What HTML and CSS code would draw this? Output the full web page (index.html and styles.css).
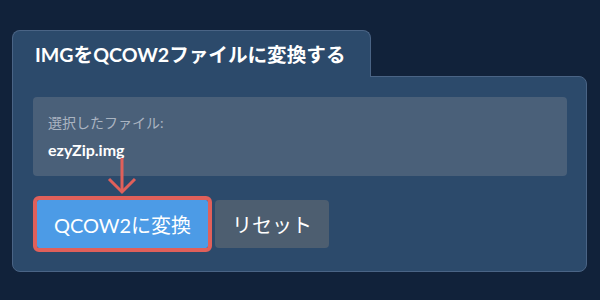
FILE: index.html
```html
<!DOCTYPE html>
<html lang="ja">
<head>
<meta charset="utf-8">
<link rel="stylesheet" href="styles.css">
</head>
<body>
<div class="card">
  <div class="tab"><h1 class="title">IMGをQCOW2ファイルに変換する</h1></div>
  <div class="panel">
    <div class="filebox">
      <div class="label">選択したファイル:</div>
      <div class="filename">ezyZip.img</div>
    </div>
    <div class="actions">
      <svg class="arrow" width="30" height="38" viewBox="0 0 30 38" aria-hidden="true">
        <path d="M15 1 V35" fill="none" stroke="#e0605a" stroke-width="3"/>
        <path d="M2 22 L15 35 L28 22" fill="none" stroke="#e0605a" stroke-width="3"/>
      </svg>
      <button class="btn btn-convert">QCOW2に変換</button>
      <button class="btn btn-reset">リセット</button>
    </div>
  </div>
</div>
</body>
</html>
```
FILE: styles.css
```css
html, body {
  margin: 0;
  padding: 0;
}
body {
  background: #11223a;
  width: 600px;
  height: 300px;
  font-family: Lato, "Noto Sans CJK JP", sans-serif;
  color: #ffffff;
  overflow: hidden;
}
.card {
  padding: 30px 0 0 12px;
  width: 575px;
}
.tab {
  position: relative;
  z-index: 1;
  width: 357px;
  height: 46px;
  background: #2c4a6b;
  border: 1px solid #4a6485;
  border-bottom: none;
  border-radius: 8px 8px 0 0;
  margin-bottom: -1px;
}
.title {
  margin: 0;
  padding: 0 0 0 22px;
  font-size: 19.6px;
  font-weight: 700;
  line-height: 48px;
  color: #ffffff;
  white-space: nowrap;
}
.panel {
  background: #2c4a6b;
  border: 1px solid #4a6485;
  border-radius: 0 8px 8px 8px;
  padding: 20px 19px 23px 20px;
}
.filebox {
  background: #4a6079;
  border-radius: 4px;
  padding: 15px 15px 14px 15px;
}
.label {
  font-size: 14px;
  line-height: 22px;
  color: #aab4c1;
  margin-bottom: 4px;
}
.filename {
  font-size: 16px;
  font-weight: 700;
  line-height: 24px;
  color: #ffffff;
}
.actions {
  position: relative;
  display: flex;
  gap: 7px;
  margin: 24px 0 0 4px;
}
.arrow {
  position: absolute;
  left: 70px;
  top: -43px;
}
.btn {
  height: 48px;
  border: none;
  border-radius: 4px;
  padding: 0;
  font-family: Lato, "Noto Sans CJK JP", sans-serif;
  font-size: 20px;
  color: #ffffff;
  white-space: nowrap;
  text-align: center;
}
.btn-convert {
  background: #4c9be6;
  width: 171px;
  outline: 4px solid #e0605a;
  border-radius: 2px;
}
.btn-reset {
  background: #4d5e70;
  width: 114px;
}
```
